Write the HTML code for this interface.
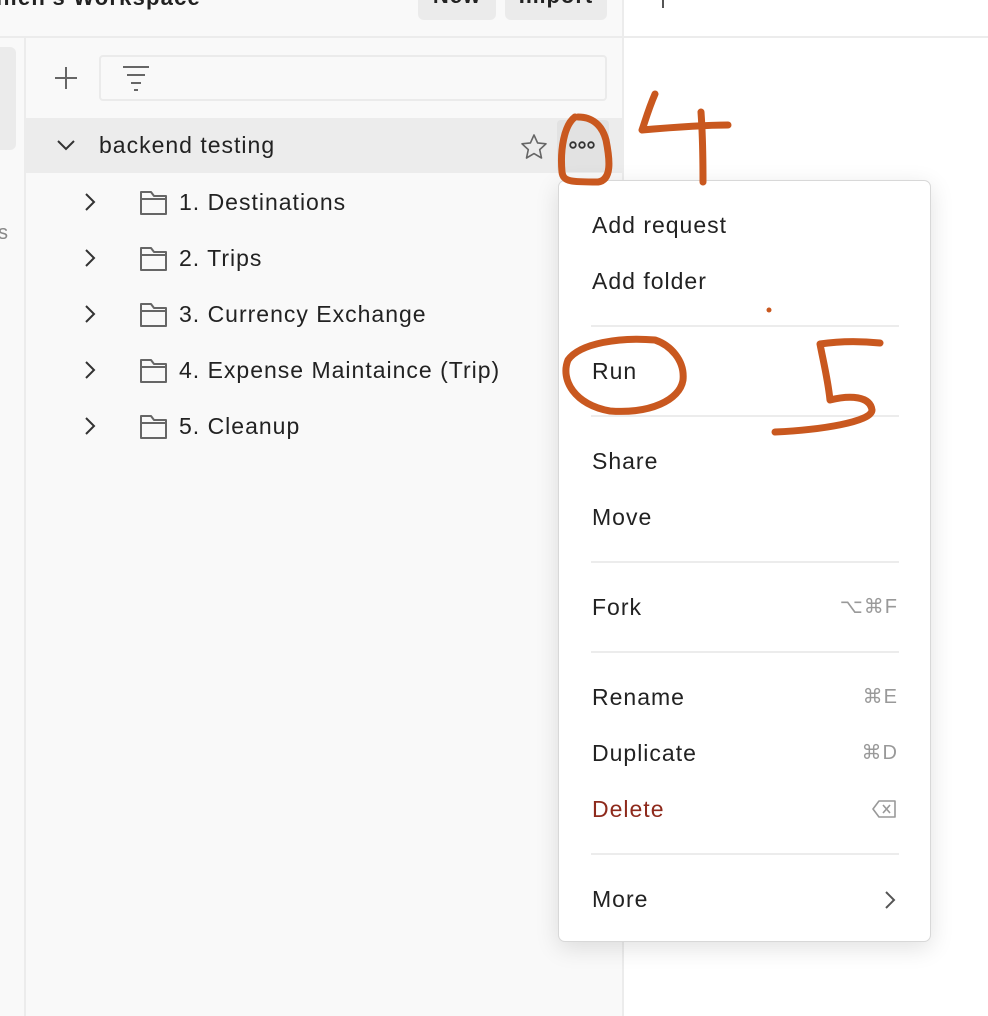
<!DOCTYPE html>
<html><head><style>
*{margin:0;padding:0;box-sizing:border-box}
body{width:988px;height:1016px;overflow:hidden;background:#fff;font-family:"Liberation Sans",sans-serif;color:#222;position:relative}
.a{position:absolute}
.t{font-size:23px;line-height:1;letter-spacing:1px}
.mi{position:absolute;left:33px;font-size:23px;color:#222;line-height:1;letter-spacing:1px}
.sc{position:absolute;right:32px;font-size:20px;color:#999;line-height:1;letter-spacing:1px}
.sep{position:absolute;left:32px;width:308px;height:2px;background:#ececec}
.btn{position:absolute;top:-22px;height:42px;background:#ebebeb;border-radius:6px;font-size:22px;font-weight:bold;text-align:center;line-height:1;overflow:hidden;letter-spacing:1px}
</style></head><body>
<div class="a" style="left:0;top:0;width:623px;height:1016px;background:#f9f9f9"></div>
<div class="a" style="left:0;top:36px;width:988px;height:2px;background:#ececec"></div>
<div class="a" style="left:622px;top:0;width:2px;height:1016px;background:#ececec"></div>
<div class="a" style="left:24px;top:38px;width:2px;height:978px;background:#ececec"></div>
<div class="a" style="left:-10px;top:47px;width:26px;height:103px;background:#ebebeb;border-radius:6px"></div>
<div class="a" style="left:-2px;top:222px;font-size:20px;color:#888">s</div>
<div class="a" style="left:-4px;top:-15px;font-size:22px;font-weight:bold;color:#222;letter-spacing:1.2px">nien's Workspace</div>
<div class="btn" style="left:418px;width:78px"><span style="position:relative;top:7px">New</span></div>
<div class="btn" style="left:505px;width:102px"><span style="position:relative;top:7px">Import</span></div>
<div class="a" style="left:662px;top:0;width:2px;height:8px;background:#555"></div>
<svg class="a" style="left:54px;top:66px" width="24" height="24"><path d="M12 1V23M1 12H23" stroke="#666" stroke-width="2"/></svg>
<div class="a" style="left:99px;top:55px;width:508px;height:46px;border:2px solid #ebebeb;border-radius:4px;background:#f9f9f9"></div>
<svg class="a" style="left:120px;top:64px" width="32" height="28"><path d="M3 3H29M7 11H25M11 19H21M14 26H18" stroke="#666" stroke-width="2"/></svg>
<div class="a" style="left:26px;top:118px;width:596px;height:55px;background:#ececec"></div>
<svg class="a" style="left:56px;top:138px" width="20" height="14"><path d="M2 3L10 11L18 3" fill="none" stroke="#333" stroke-width="2"/></svg>
<div class="a t" style="left:99px;top:134px">backend testing</div>
<svg class="a" style="left:519px;top:132px" width="30" height="30"><path d="M15 3L18.6 10.9L27 11.8L20.7 17.6L22.5 26L15 21.6L7.5 26L9.3 17.6L3 11.8L11.4 10.9Z" fill="none" stroke="#666" stroke-width="1.6" stroke-linejoin="round"/></svg>
<div class="a" style="left:557px;top:120px;width:52px;height:52px;background:#e2e2e2;border-radius:4px"></div>
<svg class="a" style="left:567px;top:139px" width="32" height="12"><circle cx="6" cy="6" r="2.8" fill="none" stroke="#333" stroke-width="1.8"/><circle cx="15" cy="6" r="2.8" fill="none" stroke="#333" stroke-width="1.8"/><circle cx="24" cy="6" r="2.8" fill="none" stroke="#333" stroke-width="1.8"/></svg>

<div class="a" style="left:0;top:174px;width:620px">
<svg style="position:absolute;left:0;top:0" width="560" height="270">
<g fill="none" stroke="#333" stroke-width="2"><path d="M86 20L94 28L86 36"/><path d="M86 76L94 84L86 92"/><path d="M86 132L94 140L86 148"/><path d="M86 188L94 196L86 204"/><path d="M86 244L94 252L86 260"/></g>
<g fill="none" stroke="#666" stroke-width="2" stroke-linejoin="round">
<path d="M141 18H151L154 22H166V40H141Z M141 25H166"/>
<path d="M141 74H151L154 78H166V96H141Z M141 81H166"/>
<path d="M141 130H151L154 134H166V152H141Z M141 137H166"/>
<path d="M141 186H151L154 190H166V208H141Z M141 193H166"/>
<path d="M141 242H151L154 246H166V264H141Z M141 249H166"/>
</g></svg>
<div class="a t" style="left:179px;top:17px">1. Destinations</div>
<div class="a t" style="left:179px;top:73px">2. Trips</div>
<div class="a t" style="left:179px;top:129px">3. Currency Exchange</div>
<div class="a t" style="left:179px;top:185px">4. Expense Maintaince (Trip)</div>
<div class="a t" style="left:179px;top:241px">5. Cleanup</div>
</div>

<div class="a" style="left:558px;top:180px;width:373px;height:762px;background:#fff;border:1px solid #d8d8d8;border-radius:7px;box-shadow:0 6px 24px rgba(0,0,0,.12)">
<div class="mi" style="top:33px">Add request</div>
<div class="mi" style="top:89px">Add folder</div>
<div class="sep" style="top:144px"></div>
<div class="mi" style="top:179px">Run</div>
<div class="sep" style="top:234px"></div>
<div class="mi" style="top:269px">Share</div>
<div class="mi" style="top:325px">Move</div>
<div class="sep" style="top:380px"></div>
<div class="mi" style="top:415px">Fork</div><div class="sc" style="top:416px">⌥⌘F</div>
<div class="sep" style="top:470px"></div>
<div class="mi" style="top:505px">Rename</div><div class="sc" style="top:506px">⌘E</div>
<div class="mi" style="top:561px">Duplicate</div><div class="sc" style="top:562px">⌘D</div>
<div class="mi" style="top:617px;color:#8e2a1c">Delete</div>
<svg class="a" style="right:33px;top:618px" width="26" height="20"><path d="M8 2H24V18H8L2 10Z M12 6L19 14M19 6L12 14" fill="none" stroke="#999" stroke-width="1.6" stroke-linejoin="round"/></svg>
<div class="sep" style="top:672px"></div>
<div class="mi" style="top:707px">More</div>
<svg class="a" style="right:33px;top:708px" width="14" height="22"><path d="M3 3L11 11L3 19" fill="none" stroke="#555" stroke-width="2"/></svg>
</div>

<svg class="a" style="left:0;top:0" width="988" height="1016">
<g fill="none" stroke="#c9581f" stroke-width="7" stroke-linecap="round" stroke-linejoin="round">
<path d="M575 117C564 125 560 150 562 172C563 182 572 182 598 182C612 180 610 160 606 140C602 125 592 117 578 117"/>
<path d="M655 94C648 110 644 125 642 130C665 128 700 125 728 125"/>
<path d="M701 112C703 140 703 165 703 182"/>
<path d="M655 340C620 337 580 343 568 360C560 380 575 405 610 411C650 414 680 400 683 380C685 360 670 345 655 340"/>
<path d="M880 343C860 341 840 341 820 344C823 360 828 380 830 400C850 395 870 396 872 410C872 422 820 430 775 432"/>
</g>
<circle cx="769" cy="310" r="2.5" fill="#c9581f"/>
</svg>
</body></html>
